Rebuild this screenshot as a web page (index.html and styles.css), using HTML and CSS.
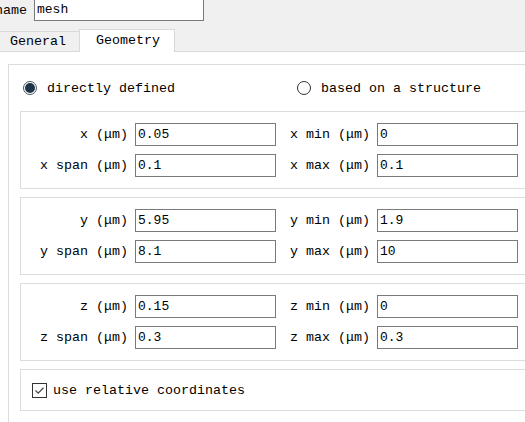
FILE: index.html
```html
<!DOCTYPE html>
<html>
<head>
<meta charset="utf-8">
<link rel="stylesheet" href="styles.css">
</head>
<body>
<div class="top">
  <span class="name-label">name</span>
  <div class="field name-field">mesh</div>
</div>
<div class="tabbar">
  <div class="tab tab-general">General</div>
  <div class="tab tab-active">Geometry</div>
  <div class="tab-fill"></div>
</div>
<div class="pane">
  <div class="outer">
    <div class="radios">
      <div class="radio-item first"><span class="radio checked"></span><span>directly defined</span></div>
      <div class="radio-item"><span class="radio"></span><span>based on a structure</span></div>
    </div>
    <div class="box">
      <span class="lbl">x (μm)</span><div class="field">0.05</div>
      <span class="lbl">x min (μm)</span><div class="field">0</div>
      <span class="lbl">x span (μm)</span><div class="field">0.1</div>
      <span class="lbl">x max (μm)</span><div class="field">0.1</div>
    </div>
    <div class="box">
      <span class="lbl">y (μm)</span><div class="field">5.95</div>
      <span class="lbl">y min (μm)</span><div class="field">1.9</div>
      <span class="lbl">y span (μm)</span><div class="field">8.1</div>
      <span class="lbl">y max (μm)</span><div class="field">10</div>
    </div>
    <div class="box">
      <span class="lbl">z (μm)</span><div class="field">0.15</div>
      <span class="lbl">z min (μm)</span><div class="field">0</div>
      <span class="lbl">z span (μm)</span><div class="field">0.3</div>
      <span class="lbl">z max (μm)</span><div class="field">0.3</div>
    </div>
    <div class="check-box">
      <span class="check"><svg width="13" height="13" viewBox="0 0 13 13"><path d="M2.5 6.5 L5.2 9.2 L10.5 3.8" fill="none" stroke="#4a4a4a" stroke-width="1.3"/></svg></span>
      <span>use relative coordinates</span>
    </div>
  </div>
</div>
</body>
</html>
```

FILE: styles.css
```css
html, body {
  margin: 0;
  padding: 0;
}
body {
  width: 525px;
  height: 422px;
  overflow: hidden;
  background: #f0f0f0;
  font-family: "Liberation Mono", "DejaVu Sans Mono", monospace;
  font-size: 13.33px;
  color: #000;
}
.top {
  height: 29px;
  display: flex;
  align-items: flex-start;
}
.name-label {
  margin-left: -5px;
  width: 39px;
  line-height: 21px;
}
.field {
  box-sizing: border-box;
  height: 23px;
  border: 1px solid #7a7a7a;
  background: #fff;
  padding-left: 2px;
  line-height: 22px;
  font-size: 13px;
  white-space: nowrap;
}
.name-field {
  width: 170px;
  height: 24px;
  margin-top: -3px;
  line-height: 24px;
}
.tabbar {
  display: flex;
  align-items: flex-end;
  height: 23px;
}
.tab {
  box-sizing: border-box;
}
.tab-general {
  width: 79px;
  height: 21px;
  padding-left: 10px;
  border-top: 1px solid #d9d9d9;
  border-bottom: 1px solid #d9d9d9;
  line-height: 19px;
}
.tab-active {
  width: 96px;
  height: 23px;
  background: #fff;
  border: 1px solid #d9d9d9;
  border-bottom: none;
  text-align: center;
  line-height: 21px;
  padding-left: 2px;
}
.tab-fill {
  flex: 1;
  align-self: stretch;
  border-bottom: 1px solid #d9d9d9;
}
.pane {
  background: #fff;
  height: 400px;
  padding: 12px 0 0 8px;
}
.outer {
  box-sizing: border-box;
  width: 560px;
  height: 420px;
  border: 1px solid #dcdcdc;
  padding-left: 11px;
}
.radios {
  height: 46px;
  display: flex;
  align-items: center;
}
.radio-item {
  display: flex;
  align-items: center;
  gap: 10px;
}
.radio-item.first {
  width: 274px;
  margin-left: 3px;
}
.radio {
  box-sizing: border-box;
  width: 14px;
  height: 14px;
  border: 1px solid #333;
  border-radius: 50%;
  background: #fff;
  display: flex;
  align-items: center;
  justify-content: center;
}
.radio.checked {
  border-color: #4a5563;
}
.radio.checked::after {
  content: "";
  width: 10px;
  height: 10px;
  border-radius: 50%;
  background: #1f3348;
}
.box {
  box-sizing: border-box;
  width: 530px;
  border: 1px solid #dcdcdc;
  padding: 11px 0;
  margin-bottom: 8px;
  display: grid;
  grid-template-columns: 107px 141px 87px 141px;
  column-gap: 7px;
  row-gap: 8px;
  align-items: center;
}
.lbl {
  text-align: right;
  white-space: nowrap;
}
.check-box {
  box-sizing: border-box;
  width: 530px;
  height: 42px;
  margin-top: 2px;
  border: 1px solid #dcdcdc;
  padding-left: 11px;
  display: flex;
  align-items: center;
  gap: 6px;
}
.check {
  box-sizing: border-box;
  width: 15px;
  height: 15px;
  border: 1px solid #333;
  background: #fff;
  display: flex;
  align-items: center;
  justify-content: center;
}
```
